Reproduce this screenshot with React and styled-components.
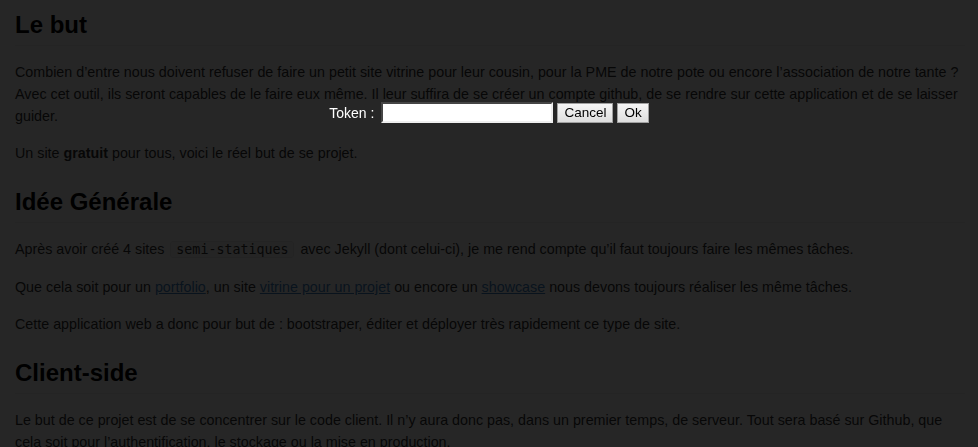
import React from 'react'
import styled, { createGlobalStyle } from 'styled-components'

const GlobalStyle = createGlobalStyle`
  html, body {
    margin: 0;
    padding: 0;
    background: #fff;
  }
  body {
    font-family: "Liberation Sans", Helvetica, Arial, sans-serif;
    font-size: 14px;
    color: #333;
  }
`

const Article = styled.div`
  padding: 0 13px 0 15px;
`

const Heading = styled.h2`
  margin: 23px 0 15px;
  padding-bottom: 5px;
  font-size: 24px;
  line-height: 30px;
  font-weight: bold;
  color: #000;
  border-bottom: 1px solid #eee;

  &:first-child {
    margin-top: 10px;
  }
`

const Para = styled.p`
  margin: 0 0 15px;
  font-size: 14.3px;
  line-height: 22px;
`

const Code = styled.code`
  margin: 0 2px;
  padding: 0 5px;
  font-family: "DejaVu Sans Mono", "Liberation Mono", monospace;
  font-size: 13.3px;
  background: #f8f8f8;
  border: 1px solid #eaeaea;
  border-radius: 3px;
`

const Anchor = styled.a`
  color: #4183c4;
  text-decoration: underline;
`

const Overlay = styled.div`
  position: fixed;
  inset: 0;
  background: rgba(0, 0, 0, 0.85);
  display: flex;
  justify-content: center;
  align-items: flex-start;
  padding-top: 102px;
`

const Prompt = styled.form`
  display: flex;
  align-items: center;
  gap: 4px;
  margin: 0;
`

const Label = styled.label`
  color: #fff;
  font-size: 14px;
  margin-right: 3px;
`

const TokenInput = styled.input`
  box-sizing: border-box;
  width: 172px;
  height: 21px;
  margin: 0;
  padding: 1px 2px;
  border: 2px inset #eee;
  border-top-color: #999;
  border-left-color: #999;
  background: #fff;
  font: 13px "Liberation Sans", Arial, sans-serif;
`

const Button = styled.button`
  box-sizing: border-box;
  height: 20px;
  margin: 0;
  padding: 0 6px;
  border: 1px solid #a0a0a0;
  background: linear-gradient(#f6f6f6, #dedede);
  color: #000;
  font: 13.5px "Liberation Sans", Arial, sans-serif;
  line-height: 18px;
  cursor: pointer;
`

const App = () => {
  return (
    <>
      <GlobalStyle />
      <Article>
        <Heading>Le but</Heading>
        <Para>
          Combien d’entre nous doivent refuser de faire un petit site vitrine pour leur cousin, pour la PME de notre pote ou encore l’association de notre tante ?
          Avec cet outil, ils seront capables de le faire eux même. Il leur suffira de se créer un compte github, de se rendre sur cette application et de se laisser guider.
        </Para>
        <Para>
          Un site <strong>gratuit</strong> pour tous, voici le réel but de se projet.
        </Para>

        <Heading>Idée Générale</Heading>
        <Para>
          Après avoir créé 4 sites <Code>semi-statiques</Code> avec Jekyll (dont celui-ci), je me rend compte qu’il faut toujours faire les mêmes tâches.
        </Para>
        <Para>
          Que cela soit pour un <Anchor href="#">portfolio</Anchor>, un site <Anchor href="#">vitrine pour un projet</Anchor> ou encore un <Anchor href="#">showcase</Anchor> nous devons toujours réaliser les même tâches.
        </Para>
        <Para>
          Cette application web a donc pour but de : bootstraper, éditer et déployer très rapidement ce type de site.
        </Para>

        <Heading>Client-side</Heading>
        <Para>
          Le but de ce projet est de se concentrer sur le code client. Il n’y aura donc pas, dans un premier temps, de serveur. Tout sera basé sur Github, que
          cela soit pour l’authentification, le stockage ou la mise en production.
        </Para>
      </Article>

      <Overlay>
        <Prompt onSubmit={(e) => e.preventDefault()}>
          <Label htmlFor="token">Token :</Label>
          <TokenInput id="token" type="text" />
          <Button type="button">Cancel</Button>
          <Button type="submit">Ok</Button>
        </Prompt>
      </Overlay>
    </>
  )
}

export default App
